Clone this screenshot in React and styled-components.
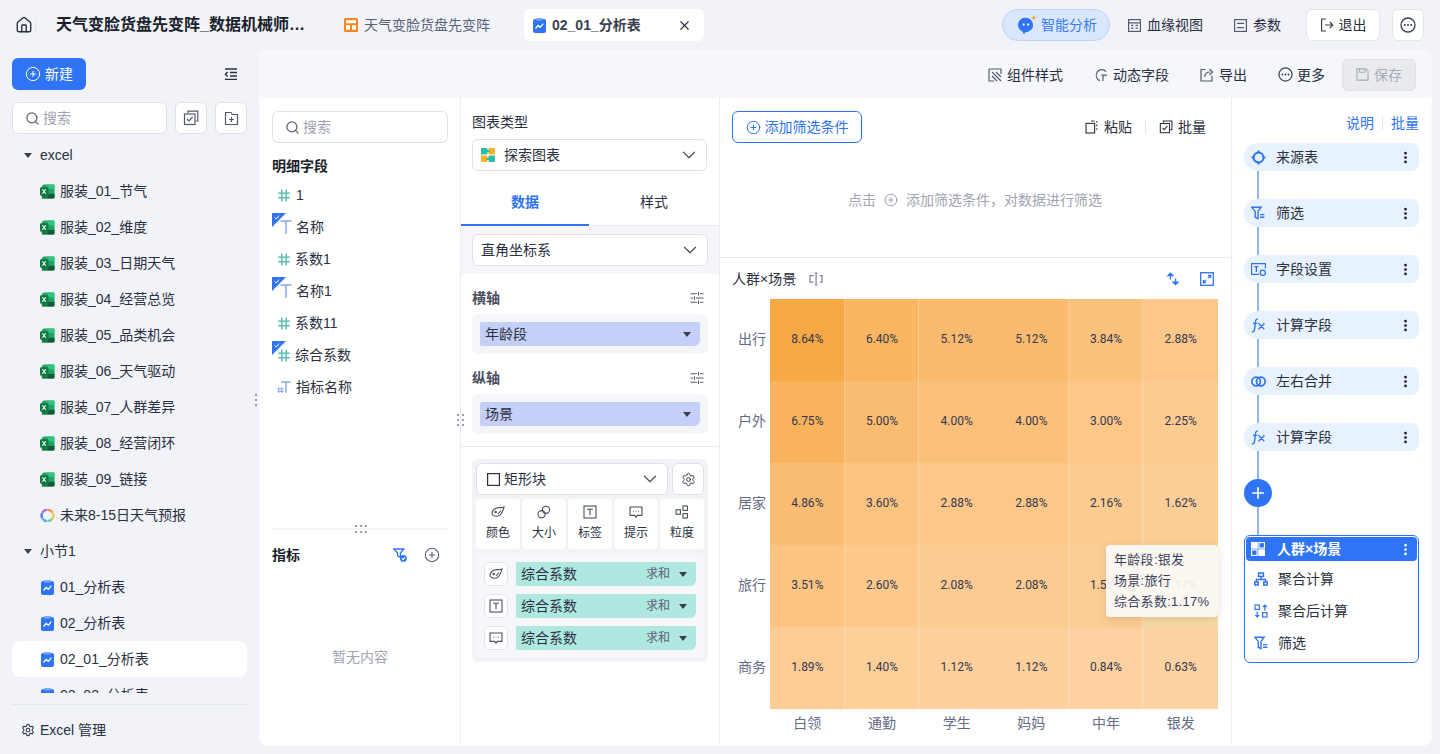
import React from "react";
import styled, { createGlobalStyle } from "styled-components";
import {
  House,
  Search,
  ChevronDown,
  X,
  Settings,
  CirclePlus,
  EllipsisVertical,
  Plus,
} from "lucide-react";

const GlobalStyle = createGlobalStyle`
  html, body { margin: 0; padding: 0; height: 100%; overflow: hidden; }
  body {
    background: #f1f3f9;
    color: #1f2433;
    font-family: "Liberation Sans", "Noto Sans CJK SC", sans-serif;
    font-size: 14px;
    line-height: 20px;
  }
  * { box-sizing: border-box; }
`;

const Ico = ({ s = 14, vb = 14, children, color = "currentColor", sw = 1.2 }) => (
  <svg
    width={s}
    height={s}
    viewBox={`0 0 ${vb} ${vb}`}
    fill="none"
    stroke={color}
    strokeWidth={sw}
    style={{ flex: "none", display: "block" }}
  >
    {children}
  </svg>
);

const MoreIcon = ({ s = 16, color = "#3b4054" }) => (
  <svg width={s} height={s} viewBox="0 0 16 16" style={{ flex: "none", display: "block" }}>
    <circle cx="8" cy="8" r="7" fill="none" stroke={color} strokeWidth="1.3" />
    <circle cx="4.8" cy="8" r="1" fill={color} />
    <circle cx="8" cy="8" r="1" fill={color} />
    <circle cx="11.2" cy="8" r="1" fill={color} />
  </svg>
);

const ExcelIcon = () => (
  <svg width="15" height="15" viewBox="0 0 16 16" style={{ flex: "none" }}>
    <rect x="2" y="0.5" width="13.5" height="15" rx="2.5" fill="#21a366" />
    <rect x="8" y="0.5" width="7.5" height="5" fill="#33c481" />
    <rect x="8" y="10.5" width="7.5" height="5" fill="#185c37" />
    <rect x="2" y="10.5" width="6" height="5" fill="#107c41" />
    <rect x="0" y="3.5" width="9" height="9" rx="1.2" fill="#107c41" />
    <path d="M2.6 5.6l3.6 4.8M6.2 5.6l-3.6 4.8" stroke="#fff" strokeWidth="1.2" />
  </svg>
);

const ChartFileIcon = ({ s = 13 }) => (
  <svg width={s} height={s + 2} viewBox="0 0 13 15" style={{ flex: "none" }}>
    <rect x="0" y="1" width="13" height="14" rx="2" fill="#2f74f4" />
    <rect x="3" y="0" width="7" height="2.5" rx="1" fill="#7aa7f8" />
    <path d="M2.5 10.5l2.6-3 2.2 1.8 3-3.6" stroke="#fff" strokeWidth="1.3" fill="none" />
  </svg>
);

const SwirlIcon = () => (
  <svg width="15" height="15" viewBox="0 0 16 16" fill="none" strokeWidth="2.6" style={{ flex: "none" }}>
    <path d="M8 2A6 6 0 0 1 13.4 5" stroke="#f2994a" />
    <path d="M13.8 5.6A6 6 0 0 1 13.2 11.4" stroke="#f2c94c" />
    <path d="M12.8 11.8A6 6 0 0 1 8 14" stroke="#6fcf97" />
    <path d="M7.4 14A6 6 0 0 1 2.6 11.2" stroke="#56b4e9" />
    <path d="M2.4 10.8A6 6 0 0 1 2.4 5.2" stroke="#5b7ff0" />
    <path d="M2.6 4.8A6 6 0 0 1 7.6 2" stroke="#b66de0" />
  </svg>
);

const HashIcon = ({ c = "#5bbcb0" }) => (
  <svg width="12" height="13" viewBox="0 0 12 13" fill="none" stroke={c} strokeWidth="1.5" style={{ flex: "none" }}>
    <path d="M3.8 0.5v12M8.2 0.5v12M0.3 4.2h11.4M0.3 8.8h11.4" />
  </svg>
);

const TextIcon = () => (
  <svg width="12" height="14" viewBox="0 0 12 14" fill="none" stroke="#8aa8ea" strokeWidth="1.5" style={{ flex: "none" }}>
    <path d="M0.5 1h11M6 1v13" />
  </svg>
);

const MetricNameIcon = () => (
  <svg width="14" height="13" viewBox="0 0 14 13" fill="none" stroke="#8aa8ea" strokeWidth="1" style={{ flex: "none" }}>
    <path d="M4 1h9.5M9 1v11" strokeWidth="1.4" />
    <path d="M1.8 6v6M4.8 6v6M0.5 8h6M0.5 10.5h6" />
  </svg>
);

const FilterIcon = ({ c = "#2f74f4", s = 14 }) => (
  <Ico s={s} color={c} sw={1.4}>
    <path d="M0.8 1.2h9.4L7 5.4V12.6L4.2 11.2V5.4z" />
    <path d="M9 8.6h4.4M9 11.2h4.4" />
  </Ico>
);

const DotsGrip = styled.span`
  display: grid;
  grid-template-columns: repeat(${(p) => p.$cols}, 2px);
  gap: ${(p) => p.$gap};
  span { width: 2px; height: 2px; background: #9a9ea9; }
`;

const Grip = ({ cols, rows, gap }) => (
  <DotsGrip $cols={cols} $gap={gap}>
    {Array.from({ length: cols * rows }).map((_, i) => (
      <span key={i} />
    ))}
  </DotsGrip>
);

const Caret = styled.i`
  display: block;
  flex: none;
  width: 0;
  height: 0;
  border-left: 4px solid transparent;
  border-right: 4px solid transparent;
  border-top: 5px solid ${(p) => p.$c || "#3b4054"};
`;

/* top bar */
const Top = styled.header`
  height: 50px;
  display: flex;
  align-items: center;
  padding: 0 16px 0 15px;
`;

const HomeBtn = styled.div`
  width: 20px;
  display: flex;
  color: #2a2f3f;
`;

const TopSep = styled.i`
  width: 1px;
  height: 14px;
  margin: 0 20px 0 0;
  background: #e3e5ec;
`;

const DocTitle = styled.h1`
  margin: 0;
  width: 252px;
  font-size: 16px;
  line-height: 24px;
  font-weight: 700;
  color: #1b1f2c;
  white-space: nowrap;
  overflow: hidden;
  text-overflow: ellipsis;
`;

const Tab = styled.div`
  display: flex;
  align-items: center;
  height: 32px;
  gap: 6px;
  padding: 0 ${(p) => (p.$on ? "12px 0 9px" : "0")};
  margin-left: ${(p) => p.$ml};
  width: ${(p) => (p.$on ? "180px" : "auto")};
  background: ${(p) => (p.$on ? "#fff" : "transparent")};
  border-radius: 6px;
  color: ${(p) => (p.$on ? "#3a3f50" : "#5a6175")};
  font-weight: ${(p) => (p.$on ? 700 : 400)};
  white-space: nowrap;
`;

const TabClose = styled.span`
  margin-left: auto;
  display: flex;
  color: #2a2f3f;
`;

const TopRight = styled.div`
  margin-left: auto;
  display: flex;
  align-items: center;
`;

const AiPill = styled.div`
  height: 32px;
  width: 108px;
  display: flex;
  align-items: center;
  gap: 4px;
  padding-left: 14px;
  border: 1px solid #bcd5fb;
  border-radius: 16px;
  background: #d9e7fd;
  color: #3d7af5;
`;

const TopLink = styled.div`
  display: flex;
  align-items: center;
  gap: 6px;
  margin-left: ${(p) => p.$ml};
  color: #2a2f3f;
`;

const TopBtn = styled.div`
  height: 32px;
  width: ${(p) => p.$w};
  margin-left: ${(p) => p.$ml};
  display: flex;
  align-items: center;
  justify-content: center;
  gap: 5px;
  background: #fff;
  border: 1px solid #e3e5ec;
  border-radius: 6px;
  color: #2a2f3f;
`;

/* page */
const Body = styled.div`
  height: 704px;
  display: flex;
`;

const Side = styled.aside`
  position: relative;
  width: 259px;
  flex: none;
  padding: 8px 12px 0;
  display: flex;
  flex-direction: column;
`;

const SideHead = styled.div`
  display: flex;
  align-items: center;
  justify-content: space-between;
  padding-right: 9px;
`;

const NewBtn = styled.div`
  width: 74px;
  height: 32px;
  display: flex;
  align-items: center;
  justify-content: center;
  gap: 4px;
  border-radius: 6px;
  background: #2f74f4;
  color: #fff;
`;

const SideTools = styled.div`
  display: flex;
  gap: 8px;
  margin-top: 12px;
`;

const SearchBox = styled.div`
  height: 32px;
  width: ${(p) => p.$w || "100%"};
  display: flex;
  align-items: center;
  gap: 3px;
  padding-left: 12px;
  background: #fff;
  border: 1px solid #dfe1e9;
  border-radius: 6px;
  color: #a0a4b0;
  svg { color: #5a6072; }
`;

const SquareBtn = styled.div`
  width: 32px;
  height: 32px;
  display: flex;
  align-items: center;
  justify-content: center;
  flex: none;
  background: #fff;
  border: 1px solid #dfe1e9;
  border-radius: 6px;
  color: #555b6e;
`;

const Tree = styled.div`
  height: 557px;
  margin-top: 3px;
  overflow: hidden;
`;

const TreeRow = styled.div`
  height: 36px;
  flex: none;
  display: flex;
  align-items: center;
  gap: ${(p) => (p.$group ? "8px" : "5px")};
  padding-left: ${(p) => (p.$group ? "12px" : "28px")};
  background: ${(p) => (p.$on ? "#fff" : "transparent")};
  border-radius: 8px;
  color: #2b3040;
  white-space: nowrap;
`;

const SideFoot = styled.div`
  margin-top: 11px;
  height: 50px;
  display: flex;
  align-items: center;
  gap: 5px;
  padding: 0 0 0 9px;
  border-top: 1px solid #e4e6ed;
  color: #2b3040;
`;

const SideGrip = styled.div`
  position: absolute;
  right: 2px;
  top: 344px;
`;

const Panel = styled.main`
  width: 1173px;
  height: 696px;
  display: flex;
  flex-direction: column;
  background: #fff;
  border: 1px solid #f8f9fc;
  border-radius: 8px;
  overflow: hidden;
`;

const ToolBar = styled.div`
  height: 47px;
  flex: none;
  display: flex;
  align-items: center;
  justify-content: flex-end;
  gap: 31px;
  padding-right: 15px;
  background: #f6f7fb;
  color: #2a2f3f;
`;

const ToolItem = styled.div`
  display: flex;
  align-items: center;
  gap: ${(p) => p.$gap || "5px"};
`;

const SaveBtn = styled.div`
  width: 74px;
  height: 32px;
  margin-left: -14px;
  display: flex;
  align-items: center;
  justify-content: center;
  gap: 5px;
  background: #e9eaee;
  border: 1px solid #e0e1e6;
  border-radius: 6px;
  color: #a8abb5;
`;

const Cols = styled.div`
  flex: 1;
  min-height: 0;
  display: flex;
`;

/* fields column */
const Fields = styled.section`
  width: 201px;
  flex: none;
  display: flex;
  flex-direction: column;
  padding: 13px 12px 0;
  border-right: 1px solid #eceef4;
`;

const FieldTop = styled.div`
  height: 417px;
  flex: none;
`;

const GroupTitle = styled.div`
  margin-top: 14px;
  height: 22px;
  line-height: 19px;
  font-weight: 700;
  color: #1b1f2c;
`;

const FieldRow = styled.div`
  position: relative;
  height: 32px;
  display: flex;
  align-items: center;
  padding-left: ${(p) => p.$pl};
  gap: ${(p) => p.$gap};
  color: #2b3040;
`;

const Corner = styled.svg`
  position: absolute;
  left: 0;
  top: 2px;
`;

const Rule = styled.div`
  position: relative;
  height: 2px;
  flex: none;
  background: #f2f3f5;
`;

const RuleGrip = styled.div`
  position: absolute;
  left: 83px;
  top: -3px;
`;

const MetricHead = styled.div`
  height: 24px;
  margin-top: 13px;
  display: flex;
  align-items: center;
  font-weight: 700;
  color: #1b1f2c;
`;

const MetricTools = styled.div`
  margin-left: auto;
  display: flex;
  align-items: center;
  gap: 17px;
  padding-right: 8px;
  color: #555b6e;
`;

const Empty = styled.div`
  margin-top: 80px;
  text-align: center;
  color: #a0a4b0;
`;

/* config column */
const Config = styled.section`
  position: relative;
  width: 259px;
  flex: none;
  border-right: 1px solid #eceef4;
`;

const ConfigGrip = styled.div`
  position: absolute;
  left: -4px;
  top: 316px;
`;

const ConfigHead = styled.div`
  padding: 13px 12px 0 11px;
`;

const FieldLabel = styled.div`
  height: 22px;
  margin-bottom: 6px;
  line-height: 22px;
  color: #2b3040;
`;

const Select = styled.div`
  height: 32px;
  flex: ${(p) => (p.$grow ? 1 : "none")};
  display: flex;
  align-items: center;
  gap: ${(p) => p.$gap || "5px"};
  padding: 0 6px 0 ${(p) => p.$pl || "8px"};
  background: #fff;
  border: 1px solid #dfe1e9;
  border-radius: 6px;
  color: #2b3040;
  > svg:last-child { margin-left: auto; color: #4a4f60; }
`;

const Tabs = styled.div`
  display: flex;
  height: 46px;
  margin-top: 9px;
  border-bottom: 1px solid #e8eaf0;
`;

const TabItem = styled.div`
  width: ${(p) => p.$w};
  display: flex;
  align-items: center;
  justify-content: center;
  font-weight: ${(p) => (p.$on ? 700 : 400)};
  color: ${(p) => (p.$on ? "#2f74f4" : "#2b3040")};
  border-bottom: 2px solid ${(p) => (p.$on ? "#2f74f4" : "transparent")};
  margin-bottom: -1px;
`;

const Band = styled.div`
  padding: 8px 11px;
  background: #f5f6f9;
`;

const AxisBlock = styled.div`
  padding: 12px 11px 0;
`;

const AxisHead = styled.div`
  height: 24px;
  display: flex;
  align-items: center;
  justify-content: space-between;
  padding-right: 4px;
  font-weight: 700;
  color: #4a4f60;
`;

const Well = styled.div`
  margin-top: 4px;
  padding: 8px;
  background: #f5f6f9;
  border-radius: 6px;
`;

const Pill = styled.div`
  height: 24px;
  flex: ${(p) => (p.$grow ? 1 : "none")};
  display: flex;
  align-items: center;
  padding: 0 9px 0 5px;
  border-radius: 2px 2px 6px 2px;
  background: ${(p) => (p.$green ? "#aee8e0" : "#c5cff8")};
  color: #2b3040;
`;

const PillRight = styled.div`
  margin-left: auto;
  display: flex;
  align-items: center;
  gap: 9px;
  font-size: 12px;
  color: #5a6072;
`;

const ConfigRule = styled.div`
  height: 1px;
  margin-top: 12px;
  background: #e8eaf0;
`;

const MarkWell = styled.div`
  margin: 12px 11px 0;
  padding: 4px;
  background: #f2f3f7;
  border-radius: 6px;
`;

const MarkTop = styled.div`
  display: flex;
  gap: 4px;
`;

const Tiles = styled.div`
  display: grid;
  grid-template-columns: repeat(5, 44px);
  gap: 2px;
  margin-top: 4px;
`;

const Tile = styled.div`
  height: 50px;
  display: flex;
  flex-direction: column;
  align-items: center;
  justify-content: center;
  gap: 4px;
  background: #fff;
  border-radius: 4px;
  font-size: 12px;
  color: #2b3040;
  svg { color: #4a4f60; }
`;

const MarkList = styled.div`
  margin-top: 5px;
  padding: 8px;
  display: flex;
  flex-direction: column;
  gap: 8px;
  background: #f6f7fa;
  border-radius: 4px;
`;

const MarkRow = styled.div`
  display: flex;
  align-items: center;
  gap: 8px;
`;

const MarkIcon = styled.div`
  width: 24px;
  height: 24px;
  flex: none;
  display: flex;
  align-items: center;
  justify-content: center;
  background: #fff;
  border: 1px solid #e3e5ec;
  border-radius: 6px;
  color: #4a4f60;
`;

/* chart column */
const ChartCol = styled.section`
  width: 512px;
  flex: none;
  display: flex;
  flex-direction: column;
  border-right: 1px solid #eceef4;
`;

const FilterArea = styled.div`
  height: 160px;
  flex: none;
  display: flex;
  flex-direction: column;
  padding: 13px 12px 0;
  border-bottom: 1px solid #e8eaf0;
`;

const FilterTop = styled.div`
  display: flex;
  align-items: center;
  color: #2b3040;
`;

const AddFilter = styled.div`
  width: 130px;
  height: 32px;
  display: flex;
  align-items: center;
  justify-content: center;
  gap: 4px;
  border: 1px solid #2f74f4;
  border-radius: 6px;
  color: #2f74f4;
`;

const FilterTools = styled.div`
  margin-left: auto;
  padding-right: 13px;
  display: flex;
  align-items: center;
  gap: 13px;
`;

const VSep = styled.i`
  width: 1px;
  height: 14px;
  background: #e3e5ec;
`;

const FilterHint = styled.div`
  flex: 1;
  display: flex;
  align-items: center;
  justify-content: center;
  gap: 8px;
  color: #a0a4b0;
  padding-right: 1px;
`;

const ChartHead = styled.div`
  height: 41px;
  flex: none;
  display: flex;
  align-items: center;
  gap: 13px;
  padding: 0 17px 0 12px;
  color: #2b3040;
`;

const ChartTools = styled.div`
  margin-left: auto;
  display: flex;
  align-items: center;
  gap: 20px;
  color: #2f74f4;
`;

const Heat = styled.div`
  position: relative;
  display: grid;
  grid-template-columns: 50px repeat(6, 1fr);
  grid-template-rows: repeat(5, 82px) 28px;
  width: 498px;
`;

const RowLabel = styled.div`
  display: flex;
  align-items: center;
  justify-content: flex-end;
  padding: 0 4px 2px 0;
  color: #666b85;
`;

const ColLabel = styled.div`
  display: flex;
  align-items: center;
  justify-content: center;
  color: #666b85;
`;

const Cell = styled.div`
  display: flex;
  align-items: center;
  justify-content: center;
  padding-bottom: 2px;
  font-family: Roboto, "Liberation Sans", sans-serif;
  font-size: 12px;
  color: #33384f;
  box-shadow: ${(p) => (p.$seam ? "inset -1px 0 rgba(255,255,255,.3)" : "none")};
`;

const Tip = styled.div`
  position: absolute;
  left: 386px;
  top: 246px;
  width: 112px;
  height: 72px;
  padding: 4px 0 0 8px;
  background: rgba(251, 249, 246, 0.93);
  border-radius: 4px;
  box-shadow: 0 3px 10px rgba(120, 90, 40, 0.18);
  font-size: 13px;
  line-height: 21px;
  letter-spacing: 0.3px;
  color: #3a3f5c;
  white-space: nowrap;
`;

/* flow column */
const Flow = styled.section`
  flex: 1;
  min-width: 0;
  padding: 13px 12px 0;
`;

const FlowHead = styled.div`
  height: 24px;
  margin-bottom: 8px;
  display: flex;
  align-items: center;
  justify-content: flex-end;
  gap: 8px;
  color: #2f74f4;
`;

const Steps = styled.div`
  display: flex;
  flex-direction: column;
  gap: 28px;
`;

const Step = styled.div`
  position: relative;
  height: 28px;
  display: flex;
  align-items: center;
  padding: 0 6px 0 7px;
  gap: 11px;
  background: #e8f1fe;
  border-radius: 14px 8px 8px 14px;
  color: #2b3040;
  &::after {
    content: "";
    position: absolute;
    left: 13px;
    top: 28px;
    width: 2px;
    height: 28px;
    background: #8fb5f7;
  }
`;

const StepIcon = styled.span`
  width: 14px;
  display: flex;
  justify-content: center;
  color: #2f74f4;
`;

const StepMore = styled.span`
  margin-left: auto;
  display: flex;
  color: ${(p) => (p.$light ? "#fff" : "#1b1f2c")};
`;

const AddStep = styled.div`
  position: relative;
  width: 28px;
  height: 28px;
  display: flex;
  align-items: center;
  justify-content: center;
  border-radius: 50%;
  background: #2f74f4;
  color: #fff;
  &::after {
    content: "";
    position: absolute;
    left: 13px;
    top: 28px;
    width: 2px;
    height: 28px;
    background: #8fb5f7;
  }
`;

const StepGroup = styled.div`
  height: 128px;
  padding: 1px;
  border: 1px solid #2f74f4;
  border-radius: 6px;
`;

const GroupHead = styled.div`
  height: 24px;
  margin-bottom: 2px;
  display: flex;
  align-items: center;
  gap: 12px;
  padding: 0 4px 0 5px;
  background: #2f74f4;
  border-radius: 4px;
  font-weight: 700;
  color: #fff;
`;

const SubStep = styled.div`
  height: 32px;
  display: flex;
  align-items: center;
  gap: 10px;
  padding-left: 8px;
  color: #2b3040;
  svg { color: #2f74f4; }
`;

const SheetIcon = styled.span`
  display: flex;
  width: 15px;
  justify-content: center;
`;

const files = ["服装_01_节气", "服装_02_维度", "服装_03_日期天气", "服装_04_经营总览", "服装_05_品类机会", "服装_06_天气驱动", "服装_07_人群差异", "服装_08_经营闭环", "服装_09_链接"];
const sheets = ["01_分析表", "02_分析表", "02_01_分析表", "02_02_分析表"];
const rowNames = ["出行", "户外", "居家", "旅行", "商务"];
const colNames = ["白领", "通勤", "学生", "妈妈", "中年", "银发"];
const heat = [
  [8.64, 6.4, 5.12, 5.12, 3.84, 2.88],
  [6.75, 5.0, 4.0, 4.0, 3.0, 2.25],
  [4.86, 3.6, 2.88, 2.88, 2.16, 1.62],
  [3.51, 2.6, 2.08, 2.08, 1.56, 1.17],
  [1.89, 1.4, 1.12, 1.12, 0.84, 0.63],
];

const heatColor = (v) => {
  const t = (v - 0.63) / 8.01;
  return `rgb(${Math.round(253 - t * 5)},${Math.round(211 - t * 42)},${Math.round(162 - t * 92)})`;
};

const CheckCorner = () => (
  <Corner width="14" height="14" viewBox="0 0 14 14">
    <path d="M0 0h14L0 14z" fill="#2f74f4" />
    <path d="M2.5 4.5l1.6 1.6 3-3.4" stroke="#fff" strokeWidth="1" fill="none" />
  </Corner>
);

const DoubleCheck = ({ s = 16 }) => (
  <Ico s={s} vb={16}>
    <path d="M5 3V1.2h9.8V11H13" />
    <rect x="1.5" y="4" width="10.5" height="10.5" />
    <path d="M4 9l2 2 3.6-4" />
  </Ico>
);

const PaletteIcon = () => (
  <Ico s={14} sw={1.1}>
    <path d="M1 8.2C1 5 4.5 2.6 8 2.6c1.6 0 3 .4 5-.6-.4 2-.8 3-1.6 4.6-1.2 2.8-3.2 4.6-6 4.6C3 11.2 1 10 1 8.2z" />
    <circle cx="4.6" cy="7" r=".7" />
    <path d="M7 9l3-3.5" />
  </Ico>
);

const SizeIcon = () => (
  <Ico s={14} sw={1.1}>
    <circle cx="4.6" cy="9.2" r="3.6" />
    <circle cx="9" cy="4.8" r="3.6" />
  </Ico>
);

const LabelIcon = () => (
  <Ico s={14} sw={1.1}>
    <rect x="1" y="1" width="12" height="12" />
    <path d="M4 4.2h6M7 4.2v6" />
  </Ico>
);

const TipIcon = () => (
  <Ico s={14} sw={1.1}>
    <path d="M1 2h12v8.4H8.4L7 12.4 5.6 10.4H1z" />
    <path d="M4 6.2h.8M6.6 6.2h.8M9.2 6.2h.8" />
  </Ico>
);

const GrainIcon = () => (
  <Ico s={14} sw={1.1}>
    <rect x="1" y="4.8" width="4.4" height="4.4" />
    <rect x="8" y="1" width="4.4" height="4.4" />
    <rect x="8" y="8.6" width="4.4" height="4.4" />
  </Ico>
);

const SlidersIcon = () => (
  <Ico s={14} color="#555b6e" sw={1.1}>
    <path d="M0.5 2.8h6.5M10 2.8h3.5M8.5 1v3.6M0.5 7h2.5M6 7h7.5M4.5 5.2v3.6M0.5 11.2h6.5M10 11.2h3.5M8.5 9.4V13" />
  </Ico>
);

const ExploreIcon = () => (
  <svg width="14" height="14" viewBox="0 0 14 14" style={{ flex: "none" }}>
    <rect x="0" y="0" width="6.4" height="6.4" rx="1" fill="#26bfa8" />
    <rect x="7.6" y="0" width="6.4" height="6.4" rx="1" fill="#ffb020" />
    <rect x="0" y="7.6" width="6.4" height="6.4" rx="1" fill="#ffb020" />
    <rect x="7.6" y="7.6" width="6.4" height="6.4" rx="1" fill="#26bfa8" />
    <circle cx="7" cy="3.2" r="1.4" fill="#26bfa8" />
    <circle cx="7" cy="10.8" r="1.4" fill="#26bfa8" />
  </svg>
);

const FxIcon = () => (
  <Ico s={15} sw={1.3}>
    <path d="M6.4 1.2C4.8.8 4.4 1.8 4.2 3.4L3.2 11c-.2 1.6-.8 2.2-2.4 1.8M1.8 5h4.2M7 5l5.4 5.4M12.6 5L7 10.4" />
  </Ico>
);

const stepList = [
  { label: "来源表", icon: <Ico s={15} sw={1.8}><circle cx="7" cy="7" r="4.6" /><path d="M7 0.5v2.6M7 10.9v2.6M0.5 7h2.6M10.9 7h2.6" /></Ico> },
  { label: "筛选", icon: <FilterIcon /> },
  { label: "字段设置", icon: <Ico s={15} sw={1.2}><path d="M13.5 6V1.5H.5v10h7" /><path d="M3 4.4h4M5 4.4v5" /><circle cx="11" cy="10" r="2.4" /></Ico> },
  { label: "计算字段", icon: <FxIcon /> },
  { label: "左右合并", icon: <Ico s={15} sw={1.6}><circle cx="4.8" cy="7" r="4" /><circle cx="9.2" cy="7" r="4" /></Ico> },
  { label: "计算字段", icon: <FxIcon /> },
];

export default function App() {
  return (
    <>
      <GlobalStyle />
      <Top>
        <HomeBtn><House size={18} strokeWidth={1.8} /></HomeBtn>
        <TopSep />
        <DocTitle>天气变脸货盘先变阵_数据机械师助手</DocTitle>
        <Tab $ml="36px">
          <svg width="14" height="14" viewBox="0 0 14 14" style={{ flex: "none" }}>
            <rect width="14" height="14" rx="1.5" fill="#f58a1f" />
            <path d="M2 2.2h10v3H2zM2 7.2h4v4.6H2zM8 7.2h4v4.6H8z" fill="#fff" />
          </svg>
          天气变脸货盘先变阵
        </Tab>
        <Tab $on $ml="34px">
          <ChartFileIcon />
          02_01_分析表
          <TabClose><X size={15} strokeWidth={1.8} /></TabClose>
        </Tab>
        <TopRight>
          <AiPill>
            <svg width="20" height="20" viewBox="0 0 18 18" style={{ flex: "none" }}>
              <path d="M8 2.5a6.5 6.5 0 0 1 0 13c-.6 0-1 .1-1.2.9L6.4 17.6 5 15A6.5 6.5 0 0 1 8 2.5z" fill="#2f74f4" />
              <circle cx="6" cy="8.6" r="1" fill="#fff" />
              <circle cx="10" cy="8.6" r="1" fill="#fff" />
              <path d="M15 0l.7 1.8 1.8.7-1.8.7-.7 1.8-.7-1.8-1.8-.7 1.8-.7z" fill="#f5a623" />
            </svg>
            智能分析
          </AiPill>
          <TopLink $ml="18px">
            <Ico s={13} vb={13} sw={1.2} color="#555b6e"><rect x=".6" y=".6" width="11.8" height="11.8" /><path d="M.6 3.8h11.8M3 6.4h2.4M7.6 6.4H10M3 9.2h2.4M7.6 9.2H10" /></Ico>
            血缘视图
          </TopLink>
          <TopLink $ml="31px">
            <Ico s={13} vb={13} sw={1.2} color="#555b6e"><rect x=".6" y=".6" width="11.8" height="11.8" /><path d="M3 4.4h7M3 8.6h7" /></Ico>
            参数
          </TopLink>
          <TopBtn $w="74px" $ml="25px">
            <Ico s={14} color="#3b4054"><path d="M6 1H1.6v12H6M5 7h7.6M9.8 4l3 3-3 3" /></Ico>
            退出
          </TopBtn>
          <TopBtn $w="32px" $ml="12px"><MoreIcon /></TopBtn>
        </TopRight>
      </Top>
      <Body>
        <Side>
          <SideHead>
            <NewBtn><CirclePlus size={16} strokeWidth={1.5} />新建</NewBtn>
            <Ico s={14} color="#2a2f3f" sw={1.4}><path d="M1 2h12M6 5.5h7M6 9h7M1 12.4h12" /><path d="M3.6 5L1.4 7.2l2.2 2.2" /></Ico>
          </SideHead>
          <SideTools>
            <SearchBox $w="155px"><Search size={15} />搜索</SearchBox>
            <SquareBtn><DoubleCheck /></SquareBtn>
            <SquareBtn>
              <Ico s={15} vb={15}><path d="M1.5 1.5H7l1.2 2H13.5v10h-12zM5 8.5h5M7.5 6v5" /></Ico>
            </SquareBtn>
          </SideTools>
          <Tree>
            <TreeRow $group><Caret />excel</TreeRow>
            {files.map((f) => (
              <TreeRow key={f}><ExcelIcon />{f}</TreeRow>
            ))}
            <TreeRow><SwirlIcon />未来8-15日天气预报</TreeRow>
            <TreeRow $group><Caret />小节1</TreeRow>
            {sheets.map((s) => (
              <TreeRow key={s} $on={s === "02_01_分析表"}>
                <SheetIcon><ChartFileIcon /></SheetIcon>
                {s}
              </TreeRow>
            ))}
          </Tree>
          <SideFoot><Settings size={14} strokeWidth={1.8} />Excel 管理</SideFoot>
          <SideGrip><Grip cols={1} rows={3} gap="3px" /></SideGrip>
        </Side>
        <Panel>
          <ToolBar>
            <ToolItem>
              <Ico s={14} color="#555b6e"><path d="M1 1h12v5M1 1v12h5" /><path d="M4 4l9 9M4 8l5 5M8 4l5 5" /></Ico>
              组件样式
            </ToolItem>
            <ToolItem>
              <Ico s={14} color="#555b6e"><path d="M12 3.6A5.6 5.6 0 1 0 6 12.6M7.5 7.2H13M9 7.2V13" /></Ico>
              动态字段
            </ToolItem>
            <ToolItem>
              <Ico s={14} color="#555b6e"><path d="M5.5 1.5H1v11.5h11V8" /><path d="M4.6 8.8C5 5.8 7 4 10 4M9.4 1l3.2 3-3.2 3" /></Ico>
              导出
            </ToolItem>
            <ToolItem $gap="4px"><MoreIcon s={15} />更多</ToolItem>
            <SaveBtn>
              <Ico s={13} color="#a8abb5"><path d="M1 1h9.6L13 3.4V13H1zM3.6 1v3.6h6V1" /></Ico>
              保存
            </SaveBtn>
          </ToolBar>
          <Cols>
            <Fields>
              <FieldTop>
                <SearchBox><Search size={15} />搜索</SearchBox>
                <GroupTitle>明细字段</GroupTitle>
                <FieldRow $pl="6px" $gap="6px"><HashIcon />1</FieldRow>
                <FieldRow $pl="8px" $gap="4px"><CheckCorner /><TextIcon />名称</FieldRow>
                <FieldRow $pl="6px" $gap="5px"><HashIcon />系数1</FieldRow>
                <FieldRow $pl="8px" $gap="4px"><CheckCorner /><TextIcon />名称1</FieldRow>
                <FieldRow $pl="6px" $gap="5px"><HashIcon />系数11</FieldRow>
                <FieldRow $pl="6px" $gap="5px"><CheckCorner /><HashIcon />综合系数</FieldRow>
                <FieldRow $pl="5px" $gap="5px"><MetricNameIcon />指标名称</FieldRow>
              </FieldTop>
              <Rule><RuleGrip><Grip cols={3} rows={2} gap="4px 3px" /></RuleGrip></Rule>
              <MetricHead>
                指标
                <MetricTools>
                  <Ico s={14} color="#2f74f4" sw={1.3}><path d="M.8 1h10L7.4 5v4.2L4.6 8V5z" /><circle cx="10.4" cy="10.4" r="3.4" fill="#2f74f4" stroke="none" /><path d="M8.8 10.4l1.2 1.2 2-2.2" stroke="#fff" /></Ico>
                  <CirclePlus size={16} strokeWidth={1.6} />
                </MetricTools>
              </MetricHead>
              <Empty>暂无内容</Empty>
            </Fields>
            <Config>
              <ConfigGrip><Grip cols={2} rows={3} gap="3px 3px" /></ConfigGrip>
              <ConfigHead>
                <FieldLabel>图表类型</FieldLabel>
                <Select $gap="9px"><ExploreIcon />探索图表<ChevronDown size={22} strokeWidth={1.3} /></Select>
              </ConfigHead>
              <Tabs>
                <TabItem $on $w="128px">数据</TabItem>
                <TabItem $w="130px">样式</TabItem>
              </Tabs>
              <Band><Select>直角坐标系<ChevronDown size={22} strokeWidth={1.3} /></Select></Band>
              <AxisBlock>
                <AxisHead>横轴<SlidersIcon /></AxisHead>
                <Well><Pill>年龄段<PillRight><Caret /></PillRight></Pill></Well>
              </AxisBlock>
              <AxisBlock>
                <AxisHead>纵轴<SlidersIcon /></AxisHead>
                <Well><Pill>场景<PillRight><Caret /></PillRight></Pill></Well>
              </AxisBlock>
              <ConfigRule />
              <MarkWell>
                <MarkTop>
                  <Select $grow $pl="10px" $gap="4px">
                    <Ico s={13} vb={13} color="#2b3040"><rect x=".6" y=".6" width="11.8" height="11.8" /></Ico>
                    矩形块
                    <ChevronDown size={22} strokeWidth={1.3} />
                  </Select>
                  <SquareBtn><Settings size={15} strokeWidth={1.6} color="#3b4054" /></SquareBtn>
                </MarkTop>
                <Tiles>
                  <Tile><PaletteIcon />颜色</Tile>
                  <Tile><SizeIcon />大小</Tile>
                  <Tile><LabelIcon />标签</Tile>
                  <Tile><TipIcon />提示</Tile>
                  <Tile><GrainIcon />粒度</Tile>
                </Tiles>
                <MarkList>
                  {[<PaletteIcon key="p" />, <LabelIcon key="l" />, <TipIcon key="t" />].map((icon) => (
                    <MarkRow key={icon.key}>
                      <MarkIcon>{icon}</MarkIcon>
                      <Pill $green $grow>
                        综合系数
                        <PillRight>求和<Caret /></PillRight>
                      </Pill>
                    </MarkRow>
                  ))}
                </MarkList>
              </MarkWell>
            </Config>
            <ChartCol>
              <FilterArea>
                <FilterTop>
                  <AddFilter><CirclePlus size={15} strokeWidth={1.6} />添加筛选条件</AddFilter>
                  <FilterTools>
                    <ToolItem>
                      <Ico s={14} color="#3b4054"><rect x="1" y="3.4" width="8.6" height="9.6" /><path d="M11.8 1v1.6M11.8 4.6v1.6M11.8 8.2v1.6M6 1h3.6" /></Ico>
                      粘贴
                    </ToolItem>
                    <VSep />
                    <ToolItem><DoubleCheck s={14} />批量</ToolItem>
                  </FilterTools>
                </FilterTop>
                <FilterHint>
                  点击
                  <CirclePlus size={14} strokeWidth={1.4} color="#8a8f9c" />
                  添加筛选条件，对数据进行筛选
                </FilterHint>
              </FilterArea>
              <ChartHead>
                人群×场景
                <Ico s={14} color="#7d8290"><path d="M4.6 3.6H1v6.6h3.6M11 3.6h2v6.6h-2M5.6 1h3M5.6 13h3M7.1 1v12" /></Ico>
                <ChartTools>
                  <Ico s={14} color="#2f74f4" sw={1.3}><path d="M4.4 1.4v6M2 3.6l2.4-2.4 2.4 2.4z" fill="#2f74f4" /><path d="M9.6 12.6v-6M7.2 10.2l2.4 2.4 2.4-2.4z" fill="#2f74f4" /></Ico>
                  <Ico s={14} color="#2f74f4" sw={1.3}><rect x=".7" y=".7" width="12.6" height="12.6" /><path d="M8 3.4h2.6V6M10.6 3.4L7.8 6.2M6 10.6H3.4V8M3.4 10.6l2.8-2.8" /></Ico>
                </ChartTools>
              </ChartHead>
              <Heat>
                {heat.map((row, r) => (
                  <React.Fragment key={rowNames[r]}>
                    <RowLabel>{rowNames[r]}</RowLabel>
                    {row.map((v, c) => (
                      <Cell
                        key={c}
                        $seam={c < 5 && c !== 2}
                        style={{ backgroundColor: r === 3 && c === 5 ? "#f5dca8" : heatColor(v) }}
                      >
                        {v.toFixed(2)}%
                      </Cell>
                    ))}
                  </React.Fragment>
                ))}
                <span />
                {colNames.map((n) => (
                  <ColLabel key={n}>{n}</ColLabel>
                ))}
                <Tip>
                  年龄段:银发
                  <br />
                  场景:旅行
                  <br />
                  综合系数:1.17%
                </Tip>
              </Heat>
            </ChartCol>
            <Flow>
              <FlowHead>说明<VSep />批量</FlowHead>
              <Steps>
                {stepList.map((s, i) => (
                  <Step key={i}>
                    <StepIcon>{s.icon}</StepIcon>
                    {s.label}
                    <StepMore><EllipsisVertical size={15} strokeWidth={2.4} /></StepMore>
                  </Step>
                ))}
                <AddStep><Plus size={18} strokeWidth={2.2} /></AddStep>
                <StepGroup>
                  <GroupHead>
                    <Ico s={14} color="#fff" sw={1.2}><rect x=".5" y=".5" width="5.6" height="5.6" fill="#fff" /><rect x="7.9" y="7.9" width="5.6" height="5.6" fill="#fff" /><rect x="7.9" y=".5" width="5.6" height="5.6" /><rect x=".5" y="7.9" width="5.6" height="5.6" /></Ico>
                    人群×场景
                    <StepMore $light><EllipsisVertical size={15} strokeWidth={2.4} /></StepMore>
                  </GroupHead>
                  <SubStep>
                    <Ico s={14} sw={1.5}><rect x="4.6" y="1" width="4.8" height="3.4" /><path d="M7 4.4v3M2.4 10V7.4h9.2V10" /><rect x=".8" y="10" width="3.4" height="3" /><rect x="9.8" y="10" width="3.4" height="3" /></Ico>
                    聚合计算
                  </SubStep>
                  <SubStep>
                    <Ico s={14} sw={1.2}><rect x="1" y="1" width="4.4" height="4.4" /><rect x="8.6" y="8.6" width="4.4" height="4.4" /><path d="M3.2 7.6V13M1.2 11l2 2 2-2M10.8 6.4V1M8.8 3l2-2 2 2" /></Ico>
                    聚合后计算
                  </SubStep>
                  <SubStep><FilterIcon />筛选</SubStep>
                </StepGroup>
              </Steps>
            </Flow>
          </Cols>
        </Panel>
      </Body>
    </>
  );
}
